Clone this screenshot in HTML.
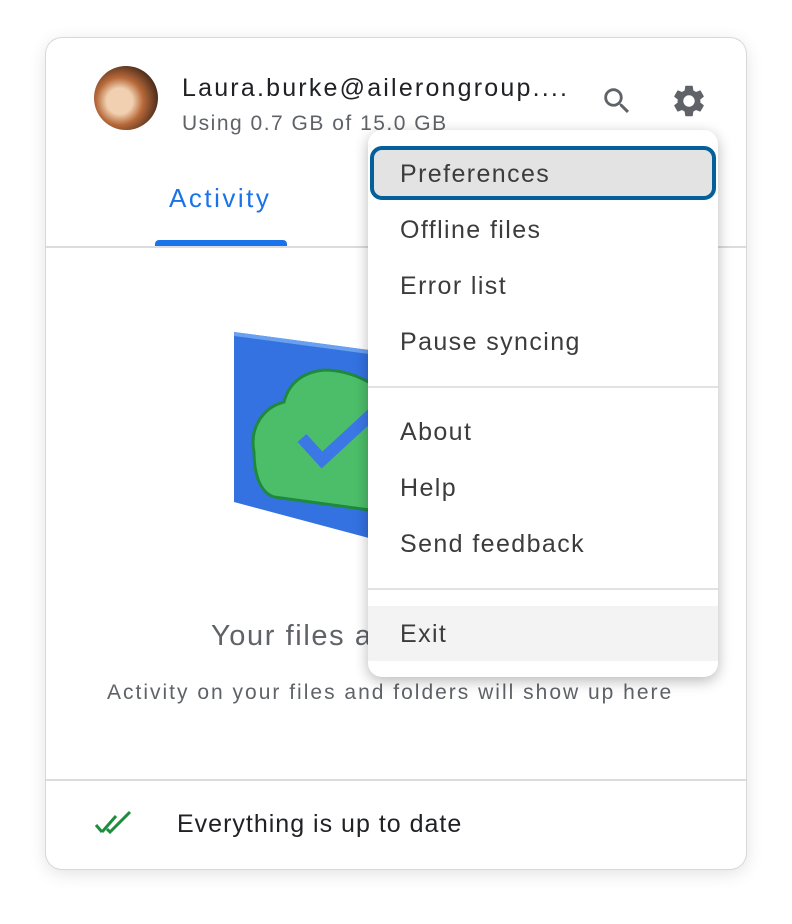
<!DOCTYPE html>
<html><head><style>
body{margin:0;width:792px;height:924px;background:#fff;position:relative;overflow:hidden;font-family:"Liberation Sans",sans-serif}
.card{position:absolute;left:46px;top:38px;width:700px;height:831px;background:#fff;border-radius:16px;box-shadow:0 0 0 1px #d8d8d8,0 4px 18px rgba(0,0,0,.12)}
.t{position:absolute;white-space:nowrap}
.menu{position:absolute;left:368px;top:130px;width:350px;height:547px;background:#fff;border-radius:14px;box-shadow:0 4px 14px rgba(0,0,0,.28)}
.mi{position:absolute;left:32px;font-size:25px;color:#3c3c3c;letter-spacing:1.4px}
.sep{position:absolute;left:0;width:350px;height:2px;background:#e2e2e2}
</style></head><body>
<div class="card">
  <div style="position:absolute;left:48px;top:28px;width:64px;height:64px;border-radius:50%;background:radial-gradient(circle at 40% 55%,#f0d0b0 0 25%,#b86a3a 45%,#4a2a1a 75%)"></div>
  <div class="t" style="left:136px;top:36px;font-size:25px;color:#202124;letter-spacing:2.2px">Laura.burke@ailerongroup....</div>
  <div class="t" style="left:136px;top:74px;font-size:21px;color:#5f6368;letter-spacing:1.5px">Using 0.7 GB of 15.0 GB</div>
  <svg style="position:absolute;left:554px;top:46px" width="34" height="34" viewBox="0 0 24 24"><path fill="#5f6368" d="M15.5 14h-.79l-.28-.27A6.47 6.47 0 0016 9.5 6.5 6.5 0 109.5 16c1.61 0 3.09-.59 4.23-1.57l.27.28v.79l5 4.99L20.49 19l-4.99-5zm-6 0C7.01 14 5 11.99 5 9.5S7.01 5 9.5 5 14 7.01 14 9.5 11.99 14 9.5 14z"/></svg>
  <svg style="position:absolute;left:624px;top:44px" width="38" height="38" viewBox="0 0 24 24"><path fill="#5f6368" d="M19.14 12.94c.04-.3.06-.61.06-.94s-.02-.64-.07-.94l2.03-1.58a.49.49 0 00.12-.61l-1.92-3.32a.49.49 0 00-.59-.22l-2.39.96c-.5-.38-1.030-.7-1.62-.94l-.36-2.54a.48.48 0 00-.48-.41h-3.84c-.24 0-.43.17-.47.41l-.36 2.54c-.59.24-1.13.57-1.620.94l-2.39-.96a.48.48 0 00-.59.22L2.74 8.87c-.12.21-.08.47.12.61l2.03 1.58c-.05.3-.09.63-.09.94s.02.64.07.94l-2.03 1.58a.49.49 0 00-.12.61l1.92 3.32c.12.22.37.29.59.22l2.39-.96c.5.38 1.03.7 1.62.94l.36 2.54c.05.24.24.41.48.41h3.84c.24 0 .44-.17.47-.41l.36-2.54c.59-.24 1.13-.56 1.62-.94l2.39.96c.22.08.47 0 .59-.22l1.92-3.32c.12-.22.07-.47-.12-.61l-2.01-1.58zM12 15.6A3.6 3.6 0 1115.6 12 3.6 3.6 0 0112 15.6z"/></svg>
  <div class="t" style="left:123px;top:145px;font-size:26px;color:#1a73e8;letter-spacing:2.5px">Activity</div>
  <div style="position:absolute;left:109px;top:202px;width:132px;height:7px;background:#1a73e8;border-radius:4px 4px 0 0"></div>
  <div style="position:absolute;left:0;top:208px;width:700px;height:2px;background:#dadce0"></div>
  <svg style="position:absolute;left:188px;top:294px" width="150" height="210" viewBox="0 0 150 210">
    <polygon points="0,0 150,20 150,210 0,170" fill="#3372e0"/>
    <polygon points="0,0 150,20 150,24 0,4" fill="#6aa0f0"/>
    <path d="M20,120 C15,95 30,75 50,70 C55,50 70,40 90,38 C110,38 130,45 150,60 L150,180 L40,165 C25,160 20,140 20,120Z" fill="#4cbe6a" stroke="#1e8a3c" stroke-width="3"/>
    <path d="M68,106 L88,128 L140,80" fill="none" stroke="#3b78e6" stroke-width="12"/>
  </svg>
  <div class="t" style="left:165px;top:582px;font-size:29px;color:#5f6368;letter-spacing:1.6px">Your files a</div>
  <div class="t" style="left:61px;top:643px;font-size:21px;color:#5f6368;letter-spacing:2px">Activity on your files and folders will show up here</div>
  <div style="position:absolute;left:0;top:741px;width:700px;height:2px;background:#dadce0"></div>
  <svg style="position:absolute;left:48px;top:770px" width="40" height="28" viewBox="0 0 40 28"><path d="M2,17 L8,24 M8,24 L22,8 M13,21 L16,24 L36,4" fill="none" stroke="#1e8e3e" stroke-width="3"/></svg>
  <div class="t" style="left:131px;top:772px;font-size:25px;color:#202124;letter-spacing:1px">Everything is up to date</div>
</div>
<div class="menu">
  <div style="position:absolute;box-sizing:border-box;width:346px;height:54px;left:2px;top:16px;background:#e3e3e3;border:4px solid #03609a;border-radius:12px"></div>
  <div class="mi" style="top:30px">Preferences</div>
  <div class="mi" style="top:86px">Offline files</div>
  <div class="mi" style="top:142px">Error list</div>
  <div class="mi" style="top:198px">Pause syncing</div>
  <div class="sep" style="top:256px"></div>
  <div class="mi" style="top:288px">About</div>
  <div class="mi" style="top:344px">Help</div>
  <div class="mi" style="top:400px">Send feedback</div>
  <div class="sep" style="top:458px"></div>
  <div style="position:absolute;left:0;top:476px;width:350px;height:55px;background:#f3f3f3"></div>
  <div class="mi" style="top:490px">Exit</div>
</div>
</body></html>
